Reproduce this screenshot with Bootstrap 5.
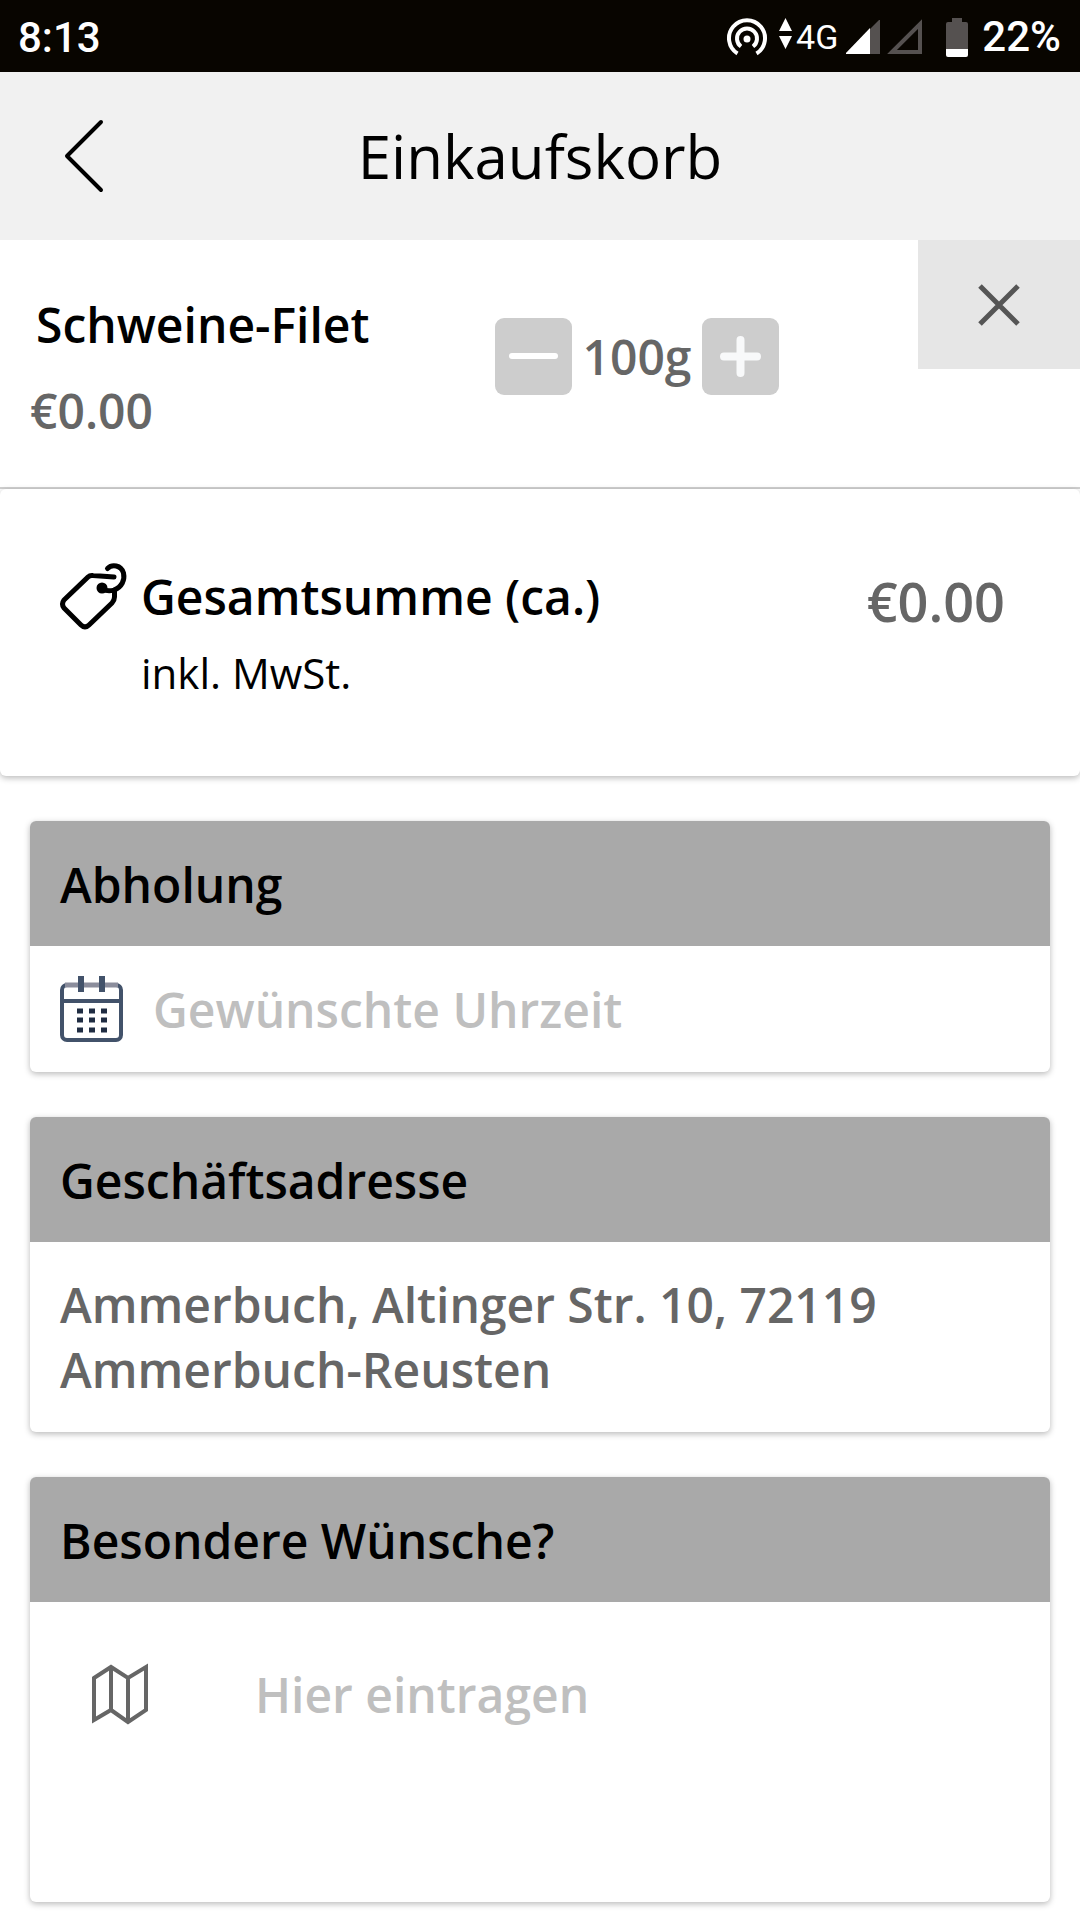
<!DOCTYPE html>
<html lang="de">
<head>
<meta charset="utf-8">
<meta name="viewport" content="width=device-width, initial-scale=1">
<title>Einkaufskorb</title>
<link href="https://cdn.jsdelivr.net/npm/bootstrap@5.3.0/dist/css/bootstrap.min.css" rel="stylesheet">
<style>
  body { font-family: "Open Sans", "Noto Sans", sans-serif; font-size: 48px; line-height: 65px; font-weight: 600; color: #000; background: #fff; }
  svg { display: block; flex: none; overflow: visible; }
  .status-bar { height: 72px; padding: 2px 19px 0 18px; background: #080500; color: #fff; font-family: Roboto, sans-serif; font-size: 42px; font-weight: 500; line-height: 72px; }
  .network { font-size: 34px; font-weight: 400; }
  .battery { margin-right: 14px; }
  .app-header { display: grid; grid-template-columns: 1fr auto 1fr; align-items: center; height: 168px; padding: 0 60px; background: #f1f1f1; }
  .app-header h1 { font-size: 60px; font-weight: 400; line-height: 82px; }
  .back-link { color: #000; padding: 0 5px; justify-self: start; }
  .cart-item { display: grid; grid-template-columns: 55fr 47fr 18fr; align-items: start; border-bottom: 2px solid #d0d0d0; }
  .item-info { padding: 52px 0 44px 30px; }
  .item-info h2 { padding-left: 6px; margin-bottom: 21px; }
  h2, .sheet-head { font-size: 48px; font-weight: 600; line-height: 65px; margin: 0; }
  .soft { color: #666; }
  .stepper { padding-top: 78px; }
  .step-btn { width: 77px; height: 77px; padding: 0; border: 0; border-radius: 9px; background: #cdcdcd; }
  .qty { width: 130px; }
  .remove-btn { height: 129px; padding: 0; border: 0; border-radius: 0; background: #e6e6e6; }
  .sheet { border: 0; border-radius: 6px; background: #fff; box-shadow: 0 2px 6px rgba(0, 0, 0, .28); }
  .total { gap: 15px; padding: 75px 75px 75px 60px; }
  .tax-note { font-size: 42px; font-weight: 400; line-height: 57px; margin-top: 15px; }
  .grand-total { font-size: 54px; line-height: 74px; }
  .sheets { gap: 45px; padding: 45px 30px 18px; }
  .sheet-head { padding: 31px 30px 29px; background: #a9a9a9; border: 0; color: #000; }
  .sheet-head:first-child { border-radius: 6px 6px 0 0; }
  .sheet-body { padding: 30px; }
  .field { border: 0; padding: 0; margin: 0; background: transparent; font: inherit; line-height: 65px; color: #666; min-width: 0; resize: none; outline: 0; }
  .field::placeholder { color: #bfbfbf; opacity: 1; }
  input.field { height: 66px; }
  textarea.field { height: 180px; }
  .time-row { gap: 30px; }
  .wish-row { gap: 107px; padding: 60px 30px 60px 62px; }
</style>
<script src="https://cdn.jsdelivr.net/npm/bootstrap@5.3.0/dist/js/bootstrap.bundle.min.js" defer></script>
</head>
<body>
<div class="status-bar d-flex justify-content-between">
  <span>8:13</span>
  <div class="d-flex align-items-center">
    <svg class="me-2" width="40" height="36" viewBox="0 0 40 36" fill="none" stroke="#fff" stroke-width="4" aria-hidden="true"><path d="M10.500 34.500A18 18 0 1 1 29.500 34.500"/><path d="M14 27.500A10 10 0 1 1 26 27.500"/><circle cx="20" cy="20" r="3.500" fill="#fff" stroke="none"/></svg>
    <svg class="ms-1 me-1" width="13" height="36" viewBox="0 0 13 36" fill="#fff" aria-hidden="true"><path d="M0 12 6.500 -1 13 12zM0 17h13L6.500 30z"/></svg>
    <span class="network me-2">4G</span>
    <svg width="34" height="34" viewBox="0 0 34 34" aria-hidden="true"><path d="M0 34V33L33 0H34V34z" fill="#555150"/><path d="M0 34V33L24 8V34z" fill="#fff"/></svg>
    <svg class="ms-2 me-4" width="34" height="34" viewBox="0 0 34 34" aria-hidden="true"><path d="M4 32 32 4V32z" fill="none" stroke="#555150" stroke-width="4"/></svg>
    <svg class="battery" width="22" height="39" viewBox="0 0 22 39" aria-hidden="true"><path d="M6 0H16V4H20Q22 4 22 6V31H0V6Q0 4 2 4H6z" fill="#555150"/><path d="M0 31H22V37Q22 39 20 39H2Q0 39 0 37z" fill="#fff"/></svg>
    <span>22%</span>
  </div>
</div>

<header class="app-header">
  <a class="back-link" href="#" aria-label="Zurück"><svg width="38" height="72" viewBox="0 0 38 72" fill="none" stroke="#000" stroke-width="4" stroke-linecap="round" stroke-linejoin="round"><path d="M36 2 2 36 36 70"/></svg></a>
  <h1 class="m-0">Einkaufskorb</h1>
</header>

<main>
  <section class="cart-item">
    <div class="item-info">
      <h2>Schweine-Filet</h2>
      <div class="soft">€0.00</div>
    </div>
    <div class="stepper d-flex align-items-center">
      <button class="step-btn btn d-flex align-items-center justify-content-center" type="button" aria-label="Weniger"><svg width="49" height="49" viewBox="0 0 49 49"><path d="M3 24H46" stroke="#fff" stroke-width="6" stroke-linecap="round"/></svg></button>
      <output class="qty soft text-center">100g</output>
      <button class="step-btn btn d-flex align-items-center justify-content-center" type="button" aria-label="Mehr"><svg width="41" height="41" viewBox="0 0 41 41"><path d="M4 20.500H37M20.500 4V37" stroke="#f8f9fa" stroke-width="8" stroke-linecap="round"/></svg></button>
    </div>
    <button class="remove-btn btn d-flex align-items-center justify-content-center" type="button" aria-label="Entfernen"><svg width="40" height="40" viewBox="0 0 40 40" stroke="#555" stroke-width="5"><path d="M1 1 39 39M39 1 1 39"/></svg></button>
  </section>

  <section class="sheet total d-flex align-items-start">
    <svg width="66" height="66" viewBox="0 0 66 66" fill="none" stroke="#000" stroke-width="5" stroke-linecap="round" stroke-linejoin="round" aria-hidden="true"><path d="M54 13 33 11.500Q30 11 28 13L4 36Q1 40 4 44L21 61Q25 65 29 61L52 39Q54.500 36 54.500 33V26"/><path d="M42 25Q48 28 54 26C62 23 65 16 63.500 9C61 1 52 0 47.500 4.500"/><circle cx="42" cy="24" r="3" fill="#000"/></svg>
    <div class="flex-fill">
      <h2>Gesamtsumme (ca.)</h2>
      <div class="tax-note">inkl. MwSt.</div>
    </div>
    <div class="grand-total soft">€0.00</div>
  </section>

  <div class="sheets d-flex flex-column">
    <section class="card sheet">
      <label class="card-header sheet-head" for="pickup">Abholung</label>
      <div class="sheet-body time-row d-flex align-items-center">
        <svg width="63" height="66" viewBox="0 0 63 66" fill="none" stroke="#42526a" stroke-width="4" aria-hidden="true"><rect x="2" y="9" width="59" height="55" rx="5"/><path d="M5 9H58" stroke="#8b8d9c" stroke-width="5"/><path d="M2 25H61"/><path d="M21 0V16M42 0V16" stroke-width="6"/><g stroke="#1f2c42" stroke-width="5" stroke-dasharray="6 6"><path d="M17 35H47M17 44H47M17 54H47"/></g></svg>
        <input class="field flex-fill" id="pickup" type="text" placeholder="Gewünschte Uhrzeit">
      </div>
    </section>

    <section class="card sheet">
      <h2 class="card-header sheet-head">Geschäftsadresse</h2>
      <div class="sheet-body soft">Ammerbuch, Altinger Str. 10, 72119 Ammerbuch-Reusten</div>
    </section>

    <section class="card sheet">
      <label class="card-header sheet-head" for="wishes">Besondere Wünsche?</label>
      <div class="wish-row d-flex align-items-start">
        <svg width="56" height="64" viewBox="0 0 56 64" fill="none" stroke="#666" stroke-width="4" aria-hidden="true"><path d="M2 16 19 5 36 16 54 5V48L36 60 19 48 2 58zM19 5V48M36 16V60"/></svg>
        <textarea class="field flex-fill" id="wishes" placeholder="Hier eintragen"></textarea>
      </div>
    </section>
  </div>
</main>
</body>
</html>
